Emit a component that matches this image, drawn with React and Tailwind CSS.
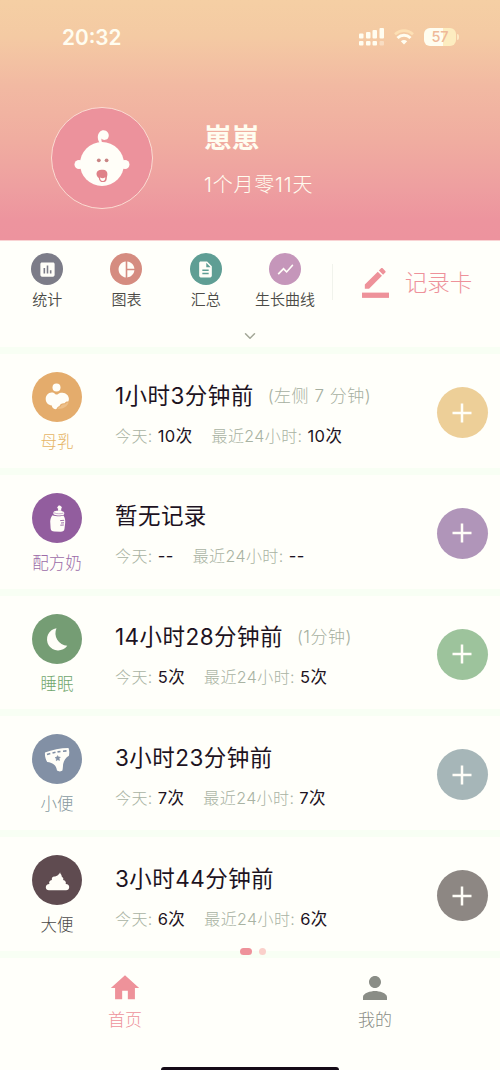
import {
  MdAssessment,
  MdDescription,
  MdHome,
  MdPerson,
  MdPieChart,
  MdShowChart,
} from "react-icons/md";
import { ChevronDown } from "lucide-react";

const shortcuts = [
  { name: "统计", icon: MdAssessment, color: "bg-[#7c7c88]" },
  { name: "图表", icon: MdPieChart, color: "bg-[#d58c80]" },
  { name: "汇总", icon: MdDescription, color: "bg-[#5f9e94]" },
  { name: "生长曲线", icon: MdShowChart, color: "bg-[#c596ba]" },
];

const records = [
  {
    name: "母乳",
    icon: NursingIcon,
    title: "1小时3分钟前",
    note: "(左侧 7 分钟)",
    today: "10次",
    recent: "10次",
    circle: "bg-[#e4ac6c]",
    label: "text-[#e6b566]",
    button: "bg-[#edcf98]",
  },
  {
    name: "配方奶",
    icon: BottleIcon,
    title: "暂无记录",
    today: "--",
    recent: "--",
    circle: "bg-[#925d9e]",
    label: "text-[#9c6ca8]",
    button: "bg-[#b095b9]",
  },
  {
    name: "睡眠",
    icon: MoonIcon,
    title: "14小时28分钟前",
    note: "(1分钟)",
    today: "5次",
    recent: "5次",
    circle: "bg-[#759d74]",
    label: "text-[#6fa66c]",
    button: "bg-[#9dc39c]",
  },
  {
    name: "小便",
    icon: DiaperIcon,
    title: "3小时23分钟前",
    today: "7次",
    recent: "7次",
    circle: "bg-[#8290a5]",
    label: "text-[#87999f]",
    button: "bg-[#a6b6b8]",
  },
  {
    name: "大便",
    icon: PoopIcon,
    title: "3小时44分钟前",
    today: "6次",
    recent: "6次",
    circle: "bg-[#5f4b50]",
    label: "text-[#4b4949]",
    button: "bg-[#8d8783]",
  },
];

function NursingIcon() {
  return (
    <svg viewBox="0 0 50 50" className="size-full">
      <circle cx="24.5" cy="15.500" r="4" fill="#fffef8" />
      <path
        d="M19.500 20.600c1.600 0 2.700.5 3.600 1.400.9.7 2.100.7 3 0 1.100-.9 2.600-1.400 4.300-1.300 3.700.2 6.500 2.900 6.500 6.300 0 1-.2 1.700-.6 2.500-1.500-.3-3 .3-3.700 1.700-2.700-.3-4.600 1-5.200 3-1.400.2-2.500 1.300-2.900 2.900-1 .3-2 .1-2.900-.5-1-.6-1.600-1.700-1.800-3-3.500-.4-6.100-3.100-6.100-6.500 0-3.600 2.500-6.400 5.800-6.500z"
        fill="#fffef8"
      />
      <path
        d="M25.500 37c.5-1.400 1.600-2.200 3-2.200.4-1.900 2.200-2.900 4.700-2.500.7-1.300 1.900-1.900 3.500-1.700-1 3-3.500 5-6.600 6z"
        fill="#edbf88"
      />
    </svg>
  );
}

function BottleIcon() {
  return (
    <svg viewBox="0 0 50 50" className="size-full" fill="#fffef8">
      <path d="M26.200 15.800c-1.200-.4-1.400-1.800-.2-2.300-.1-1.300 2.600-1.400 2.800-.2 1.300.3 1.300 1.900.3 2.400l.3 2h-3.500z" />
      <path d="M22 18.600c.8-1.300 8.300-1.200 9.600.2.900 1 .9 2 .2 3-2.600 1.200-7.200.9-10-.3-.7-.9-.6-2 .2-2.900z" />
      <path d="M20.500 22.300c3 1.100 8.300 1.500 11 .3 1.500 2.200 1.900 4.800 1.700 7.200l-.7 6c-.3 2.300-1.500 2.900-3.800 2.900l-6.200-.2c-2.500-.1-3.700-1-3.900-3.200l-.4-6.800c.1-2.500 1-4.500 2.300-6.200z" />
      <path
        d="M22 19.800c3 1.200 6.500 1.300 9.500.3"
        stroke="#925d9e"
        strokeWidth=".5"
        fill="none"
      />
      <path
        d="M28.200 27.600l4-.3M29 30l3-.2M28.300 32.200l3.500-.2"
        stroke="#925d9e"
        strokeWidth=".9"
        fill="none"
      />
    </svg>
  );
}

function MoonIcon() {
  return (
    <svg viewBox="0 0 50 50" className="size-full">
      <path
        d="M24.500 14.200a11.200 11.200 0 1 0 10.800 17.600A12.500 12.500 0 0 1 24.500 14.200z"
        fill="#fffef8"
      />
    </svg>
  );
}

function DiaperIcon() {
  return (
    <svg viewBox="0 0 50 50" className="size-full">
      <path
        d="M13 18.500c7-3 15.500-4.500 23.500-4.600.9 2.500 1 5 .4 7.800-3.900 2.300-5.900 5.800-6 11.300-.1 1.300-.2 2.500-.5 3.600-.6 1-4.200 1.100-5.400 0-.7-5.200-3.500-7.700-9.800-8.600-1.500-2.500-2.600-6-2.200-9.500z"
        fill="#fffef8"
      />
      <path
        d="M15 20.600l3.300-1M20.500 19l3-.7M25.500 17.900l3-.4M31 17.200l3.500-.3"
        stroke="#8290a5"
        strokeWidth="1.600"
      />
      <path
        d="M25.600 21.600l.9 1.500 1.800.1-1.200 1.400.4 1.800-1.700-.7-1.500 1 .1-1.900-1.300-1.200 1.800-.5z"
        fill="#8290a5"
        stroke="#8290a5"
        strokeWidth=".6"
      />
    </svg>
  );
}

function PoopIcon() {
  return (
    <svg viewBox="0 0 50 50" className="size-full">
      <path
        d="M28.300 16.500c-.9 2.300 1.700 2.800 1.500 5.200 1.600.8 1.900 2 1.300 3.300 2.300.6 3.200 2 2.600 4 2.500.1 3.600 1.500 3.500 3.300-.1 1.900-1.300 3-3.100 3H17c-2 0-3.200-1.200-3.200-3s1.300-3.100 3.600-3.200c-.8-2 .2-3.600 2.500-4-.5-1.900.5-3.300 2.500-3.500 2.300-.4 5.400-2 5.900-5.100z"
        fill="#fffef8"
      />
    </svg>
  );
}

function BabyIcon() {
  return (
    <svg viewBox="0 0 100 100" className="size-full">
      <path
        d="M48.500 36.500c-3.200-4.500-3.600-9.500-1-12.300 2.300-2.500 6.300-2.500 8.300.2 1.800 2.500 1.100 6-1.600 7.200-2 .9-3.900.3-4.700-1-.3 1.800 0 3.700 2 5.900z"
        fill="#fffef8"
      />
      <circle cx="27" cy="56.500" r="4.500" fill="#fffef8" />
      <circle cx="73" cy="56.500" r="4.500" fill="#fffef8" />
      <ellipse cx="50" cy="56" rx="22" ry="22" fill="#fffef8" />
      <circle cx="46.800" cy="52.300" r="1.900" fill="#c98585" />
      <circle cx="54.600" cy="52.300" r="1.900" fill="#c98585" />
      <path
        d="M44.500 65.500c.3-3 3-4 5.800-3.700 3-.4 5.200 1.400 5.100 4.300-.1 2.200-.6 3.200-.7 4.800-.2 2.300-1.800 3.200-3.900 3.200-2.400 0-3.700-1.600-4-4.200-1.200-.8-2.400-2.200-2.300-4.400z"
        fill="#df8188"
      />
      <path d="M48 69.500c2 .9 3.500.9 5.300-.2-.1 2.700-.7 3.700-2.500 3.700-1.700 0-2.600-1-2.800-3.500z" fill="#fffef8" />
    </svg>
  );
}

function PencilIcon() {
  return (
    <svg width="27" height="30" viewBox="0 0 24 26.700" fill="currentColor">
      <path d="M17.750 7L14 3.250l-11.500 11.500V18.500h3.750L17.750 7zm2.960-2.960c.39-.39.39-1.020 0-1.410L18.370.29c-.39-.39-1.020-.39-1.410 0L15 2.250 18.750 6l1.960-1.960z" />
      <path d="M0 21.900h24v4.700H0z" />
    </svg>
  );
}

function StatusBar() {
  return (
    <div className="flex h-[74px] items-center justify-between pl-[62px] pr-[41px]">
      <span className="pt-0.5 text-[20.800px] font-semibold text-[#fffdf0]">20:32</span>
      <div className="flex items-center">
        <svg width="26" height="20" viewBox="0 0 26 20" fill="#fffdf0">
          <rect x="0" y="6.500" width="4.500" height="5" rx="1" />
          <rect x="7" y="5" width="4.500" height="6.500" rx="1" />
          <rect x="13.500" y="3" width="4.500" height="8.500" rx="1" />
          <rect x="20.500" y="1" width="4.500" height="10.500" rx="1" />
          <rect x="0" y="14" width="4.500" height="4.500" rx="1" />
          <rect x="7" y="14" width="4.500" height="4.500" rx="1" />
          <rect x="13.500" y="14" width="4.500" height="4.500" rx="1" />
          <rect x="20.500" y="14" width="4.500" height="4.500" rx="1" opacity=".4" />
        </svg>
        <svg width="20" height="16" viewBox="0 0 20 16" fill="none" className="ml-[9px]">
          <path d="M1 5.200C6.300.4 13.700.4 19 5.200" stroke="#fde0b4" strokeWidth="2.600" />
          <path d="M3.500 9c3.800-3.600 9.200-3.600 13 0" stroke="#fffdf0" strokeWidth="3" />
          <path d="M6.800 12.300c2-1.800 4.400-1.800 6.400 0L10 15.500z" fill="#fffdf0" />
        </svg>
        <div className="ml-[10px] flex h-[18px] w-8 items-center justify-center rounded-[6px] bg-linear-to-r from-[#fffdf0] from-60% to-[#fdedc0] to-60%">
          <span className="text-[14.500px] font-medium leading-none text-[#efb999]">57</span>
        </div>
        <div className="ml-px h-1.5 w-0.5 rounded-r bg-[#fde9c4]" />
      </div>
    </div>
  );
}

function Header() {
  return (
    <header className="h-[240px] bg-[linear-gradient(to_bottom,#f5cfa4_0%,#f4caa3_15%,#f2b9a2_36%,#f0ada0_58%,#ee9fa0_78%,#ed949e_92%,#ed939e_100%)]">
      <StatusBar />
      <div className="mt-[33px] flex pl-[51px]">
        <div className="size-[102px] rounded-full border border-[#fbdcd2] bg-[#ec929c]">
          <BabyIcon />
        </div>
        <div className="ml-[51px] pt-[13px] text-[#fffdf0]">
          <h1 className="text-[27.800px] font-bold leading-9">崽崽</h1>
          <p className="mt-[15px] text-[20px] font-light leading-7 tracking-[0.800px]">1个月零11天</p>
        </div>
      </div>
    </header>
  );
}

function Shortcuts() {
  return (
    <section className="h-[107px] border-t border-[#f9d3d3]">
      <div className="flex pl-[7.500px]">
        {shortcuts.map((item) => {
          const Icon = item.icon;

          return (
            <div key={item.name} className="flex w-[79.300px] flex-col items-center pt-3">
              <div
                className={`flex size-8 items-center justify-center rounded-full text-[#fffef8] ${item.color}`}
              >
                <Icon size={19} />
              </div>
              <span className="mt-1 whitespace-nowrap text-[15px] font-[350] leading-[22px] text-[#4b4b46]">
                {item.name}
              </span>
            </div>
          );
        })}
        <div className="ml-[7px] mt-[23px] h-9 w-px bg-[#f1f3ec]" />
        <div className="ml-[29px] mt-[22px] flex h-10 items-center text-[#ee929a]">
          <PencilIcon />
          <span className="ml-4 text-[22.500px] font-light leading-none">记录卡</span>
        </div>
      </div>
      <div className="mt-[16px] flex justify-center">
        <ChevronDown size={18} strokeWidth={2} className="text-[#a3a797]" />
      </div>
    </section>
  );
}

function RecordRow({ item }) {
  const Icon = item.icon;

  return (
    <div className="flex h-[120.800px] border-t-[7px] border-[#f8fff4]">
      <div className="flex w-[114px] flex-col items-center pt-[18px]">
        <div className={`size-[50px] rounded-full ${item.circle}`}>
          <Icon />
        </div>
        <span className={`mt-2 text-[16.500px] font-light leading-6 ${item.label}`}>{item.name}</span>
      </div>
      <div className="flex-1 whitespace-nowrap pl-px pt-[25.500px]">
        <div className="flex items-center leading-8">
          <span className="text-[22.500px] font-[380] tracking-[0.450px] text-[#1d131f]">
            {item.title}
          </span>
          {item.note && (
            <span className="ml-[14px] text-[17px] font-light tracking-[0.500px] text-[#a6afa0]">
              {item.note}
            </span>
          )}
        </div>
        <div className="mt-3 flex text-[16px] font-light leading-6 tracking-[0.400px] text-[#a9b3a3]">
          <span>今天:</span>
          <span className="ml-[5px] text-[16.500px] font-[380] text-[#1d131f]">{item.today}</span>
          <span className="ml-[19px]">最近24小时:</span>
          <span className="ml-[5px] text-[16.500px] font-[380] text-[#1d131f]">{item.recent}</span>
        </div>
      </div>
      <button
        className={`mr-[12.500px] mt-[33px] flex size-[51px] items-center justify-center rounded-full ${item.button}`}
      >
        <svg width="20" height="20" viewBox="0 0 20 20" stroke="#fffef8" strokeWidth="2.500">
          <path d="M10 .5v19M.5 10h19" />
        </svg>
      </button>
    </div>
  );
}

function TabBar() {
  return (
    <nav className="relative grid h-[119px] grid-cols-2 border-t-[7px] border-[#f8fff4]">
      <div className="absolute -top-[10px] left-60 flex items-center gap-[7px]">
        <span className="h-[7px] w-3 rounded-full bg-[#ee929a]" />
        <span className="size-[7px] rounded-full bg-[#fad0ca]" />
      </div>
      <div className="flex flex-col items-center pt-[13px] text-[#ee929a]">
        <MdHome size={34} />
        <span className="mt-[3px] text-[17px] font-light leading-6">首页</span>
      </div>
      <div className="flex flex-col items-center pt-3 text-[#8a8d86]">
        <MdPerson size={36} />
        <span className="mt-0.5 text-[17px] font-light leading-6">我的</span>
      </div>
      <div className="absolute bottom-0 left-[161px] h-[3px] w-[178px] rounded-t-full bg-[#150b16]" />
    </nav>
  );
}

export default function App() {
  return (
    <div className="h-[1070px] w-[500px] overflow-hidden bg-[#fffffa] font-[Inter,'Noto_Sans_CJK_SC',sans-serif]">
      <Header />
      <Shortcuts />
      {records.map((item) => (
        <RecordRow key={item.name} item={item} />
      ))}
      <TabBar />
    </div>
  );
}
